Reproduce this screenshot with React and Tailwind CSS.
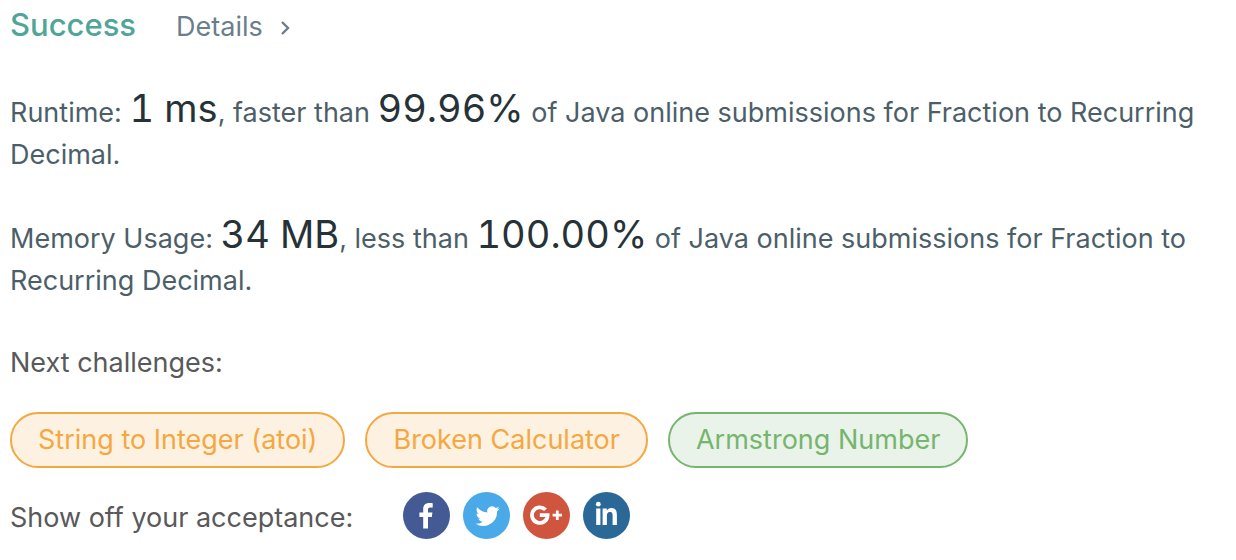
import React from "react";

const challenges = [
  { name: "String to Integer (atoi)", tone: "border-[#f5a742] bg-[#fdf2e1] text-[#f5a742]" },
  { name: "Broken Calculator", tone: "border-[#f5a742] bg-[#fdf2e1] text-[#f5a742]" },
  { name: "Armstrong Number", tone: "border-[#76b56d] bg-[#e9f3ea] text-[#76b56d]" },
];

const networks = [
  {
    name: "Facebook",
    tone: "bg-[#435a94]",
    drawing: (
      <path d="M20.2 36.6V25h-3.8V20.4h3.8v-3.3c0-4 2.4-6 6-6 1.7 0 3.1.1 3.5.2v4.1h-2.4c-1.9 0-2.3.9-2.3 2.3v2.7h4.4l-.6 4.6H25v11.6z" />
    ),
  },
  {
    name: "Twitter",
    tone: "bg-[#4aa9e9]",
    drawing: (
      <path
        transform="translate(12 12)"
        d="M24.6 4.6a10 10 0 0 1-2.8.8 5 5 0 0 0 2.1-2.7c-1 .6-2 1-3.1 1.2a4.9 4.9 0 0 0-8.4 4.5A14 14 0 0 1 2.3 3.3a4.9 4.9 0 0 0 1.5 6.6c-.8 0-1.6-.3-2.2-.6v.1a4.9 4.9 0 0 0 3.9 4.8 5 5 0 0 1-2.2.1 4.9 4.9 0 0 0 4.6 3.4A9.9 9.9 0 0 1 .6 19.7 14 14 0 0 0 22.1 7.9v-.7c1-.7 1.8-1.6 2.5-2.6z"
      />
    ),
  },
  {
    name: "Google Plus",
    tone: "bg-[#d0553f]",
    drawing: (
      <>
        <path d="M22.5 17.8A7.8 7.8 0 1 0 24.6 23.2H16.8" fill="none" stroke="currentColor" strokeWidth="3.8" />
        <path d="M32.9 18.5h2.8v3.3H39v2.8h-3.3v3.3h-2.8v-3.3h-3.3v-2.8h3.3z" />
      </>
    ),
  },
  {
    name: "LinkedIn",
    tone: "bg-[#2a6898]",
    drawing: (
      <>
        <circle cx="15.3" cy="12.2" r="2.4" />
        <path d="M13.2 16.4h4.2V33h-4.2zM19.6 16.4h4.2v2.3c.7-1.4 2.3-2.7 4.5-2.7 4.5 0 5.6 3 5.6 7v10h-4.3v-9c0-2.1-.2-4.1-2.7-4.1s-3 1.9-3 4v9.1h-4.3z" />
      </>
    ),
  },
];

function Figure({ children }) {
  return <span className="text-[38px] leading-[30px] tabular-nums text-[#263238]">{children}</span>;
}

export default function App() {
  return (
    <main className="px-[10px] pt-1 font-['Inter',sans-serif] text-[27px] leading-[42px] text-[#4c5f69]">
      <header className="flex items-baseline gap-10">
        <h1 className="text-[31px] font-medium text-[#4fa598]">Success</h1>
        <a href="#details" className="flex items-center gap-4 text-[#6a7f8b]">
          Details
          <svg className="h-4 w-3" viewBox="0 0 12 16" fill="none" stroke="currentColor" strokeWidth="2.4">
            <path d="M3 3l6 6-6 6" />
          </svg>
        </a>
      </header>
      <p className="mt-11">
        Runtime: <Figure>1 ms</Figure>, faster than <Figure>99.96%</Figure> of Java online submissions for Fraction to Recurring Decimal.
      </p>
      <p className="mt-[42px]">
        Memory Usage: <Figure>34 MB</Figure>, less than <Figure>100.00%</Figure> of Java online submissions for Fraction to Recurring Decimal.
      </p>
      <h2 className="mt-10 text-[#595959]">Next challenges:</h2>
      <div className="mt-7 flex flex-wrap gap-5">
        {challenges.map(({ name, tone }) => (
          <a key={name} href="#challenge" className={`flex h-14 items-center rounded-full border-2 px-[26px] ${tone}`}>
            {name}
          </a>
        ))}
      </div>
      <div className="mt-6 flex items-center gap-[50px] text-[#595959]">
        <span className="pt-1">Show off your acceptance:</span>
        <div className="flex gap-[13px]">
          {networks.map(({ name, tone, drawing }) => (
            <button key={name} aria-label={name} className={`size-[47px] rounded-full text-white ${tone}`}>
              <svg className="size-full" viewBox="0 0 47 47" fill="currentColor" aria-hidden="true">
                {drawing}
              </svg>
            </button>
          ))}
        </div>
      </div>
    </main>
  );
}
